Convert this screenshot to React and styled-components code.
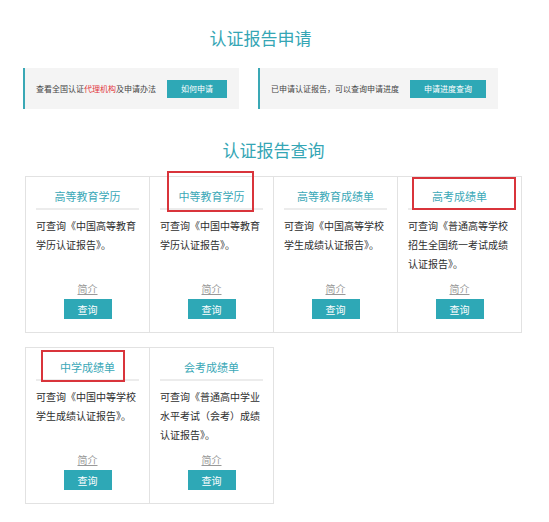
import styled, { createGlobalStyle } from 'styled-components';

const GlobalStyle = createGlobalStyle`
  body {
    margin: 0;
    background: #ffffff;
    font-family: "Noto Sans CJK SC", "Noto Sans", sans-serif;
    color: #333333;
  }
`;

const Page = styled.div`
  width: 497px;
  padding: 26px 0 20px 25px;
`;

const SectionTitle = styled.h2`
  margin: ${(p) => p.$margin || '0'};
  padding-right: ${(p) => p.$shift || 0}px;
  font-size: 17px;
  line-height: 24px;
  font-weight: 400;
  color: #35a6b5;
  text-align: center;
`;

const InfoRow = styled.div`
  display: flex;
  gap: 19px;
  margin: 18px 0 0 -2px;
`;

const InfoBox = styled.div`
  display: flex;
  align-items: center;
  gap: 11px;
  height: 41px;
  padding: 0 12px 0 11px;
  background: #f4f4f4;
  border-left: 2px solid #3aa8b5;
  font-size: 8px;
  color: #444444;
  white-space: nowrap;
`;

const Red = styled.span`
  color: #e2363c;
`;

const SmallButton = styled.button`
  height: 18px;
  padding: 0 14px;
  border: none;
  background: #2ea8b6;
  color: #ffffff;
  font-family: inherit;
  font-size: 8px;
  cursor: pointer;
`;

const CardRow = styled.div`
  display: flex;
  margin-top: ${(p) => p.$top || '0'};
`;

const Card = styled.div`
  position: relative;
  box-sizing: border-box;
  width: 125px;
  height: 157px;
  padding: 0 10px;
  border: 1px solid #e2e2e2;
  display: flex;
  flex-direction: column;
  & + & {
    margin-left: -1px;
  }
`;

const CardTitle = styled.div`
  padding: 12px 0 5px;
  line-height: 14px;
  font-size: 11px;
  color: #3aa8b7;
  text-align: center;
  border-bottom: 2px solid #ececec;
`;

const CardText = styled.p`
  flex: 1;
  margin: 6px 0 0;
  font-size: 10px;
  line-height: 19px;
  color: #2e2e2e;
`;

const Footer = styled.div`
  display: flex;
  flex-direction: column;
  align-items: center;
  gap: 3px;
  padding-bottom: 13px;
`;

const Intro = styled.a`
  font-size: 10px;
  line-height: 14px;
  color: #999999;
  text-decoration: underline;
  cursor: pointer;
`;

const QueryButton = styled.button`
  width: 48px;
  height: 20px;
  border: none;
  background: #2ea8b6;
  color: #ffffff;
  font-family: inherit;
  font-size: 10px;
  cursor: pointer;
`;

const Highlight = styled.div`
  position: absolute;
  left: ${(p) => p.$l}px;
  top: ${(p) => p.$t}px;
  width: ${(p) => p.$w}px;
  height: ${(p) => p.$h}px;
  box-sizing: border-box;
  border: 2px solid #d9343b;
  pointer-events: none;
`;

const rows = [
  [
    { title: '高等教育学历', text: '可查询《中国高等教育学历认证报告》。' },
    { title: '中等教育学历', text: '可查询《中国中等教育学历认证报告》。', mark: { l: 17, t: -6, w: 87, h: 41 } },
    { title: '高等教育成绩单', text: '可查询《中国高等学校学生成绩认证报告》。' },
    { title: '高考成绩单', text: '可查询《普通高等学校招生全国统一考试成绩认证报告》。', mark: { l: 14, t: 0, w: 104, h: 33 } },
  ],
  [
    { title: '中学成绩单', text: '可查询《中国中等学校学生成绩认证报告》。', mark: { l: 15, t: 2, w: 84, h: 32 } },
    { title: '会考成绩单', text: '可查询《普通高中学业水平考试（会考）成绩认证报告》。' },
  ],
];

function ReportCard({ item }) {
  return (
    <Card>
      <CardTitle>{item.title}</CardTitle>
      <CardText>{item.text}</CardText>
      <Footer>
        <Intro>简介</Intro>
        <QueryButton>查询</QueryButton>
      </Footer>
      {item.mark && (
        <Highlight $l={item.mark.l} $t={item.mark.t} $w={item.mark.w} $h={item.mark.h} />
      )}
    </Card>
  );
}

export default function App() {
  return (
    <>
      <GlobalStyle />
      <Page>
        <SectionTitle $shift={26}>认证报告申请</SectionTitle>
        <InfoRow>
          <InfoBox>
            <span>
              查看全国认证<Red>代理机构</Red>及申请办法
            </span>
            <SmallButton>如何申请</SmallButton>
          </InfoBox>
          <InfoBox>
            <span>已申请认证报告，可以查询申请进度</span>
            <SmallButton>申请进度查询</SmallButton>
          </InfoBox>
        </InfoRow>
        <SectionTitle $margin="29px 0 14px">认证报告查询</SectionTitle>
        {rows.map((row, i) => (
          <CardRow key={i} $top={i ? '14px' : '0'}>
            {row.map((item) => (
              <ReportCard key={item.title} item={item} />
            ))}
          </CardRow>
        ))}
      </Page>
    </>
  );
}
